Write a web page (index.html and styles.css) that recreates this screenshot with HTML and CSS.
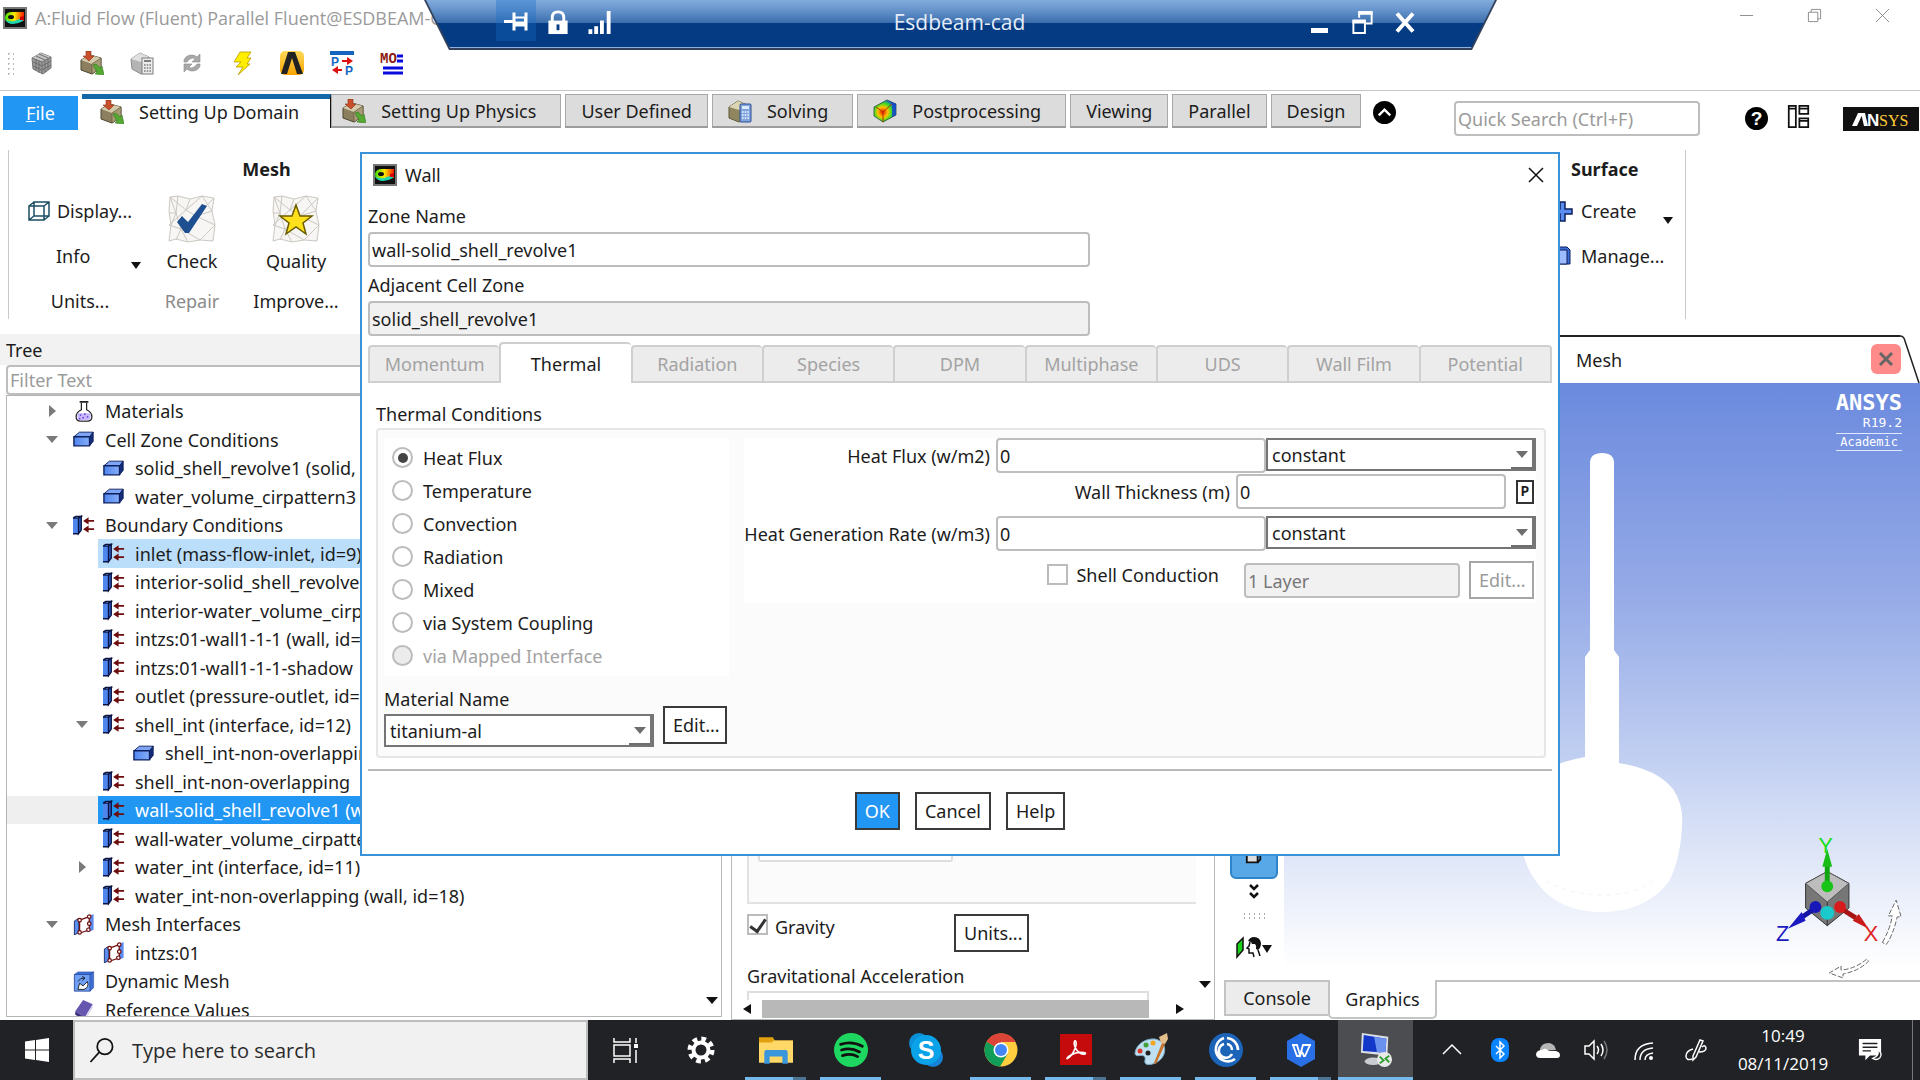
FILE: index.html
```html
<!DOCTYPE html>
<html lang="en">
<head>
  <meta charset="utf-8">
  <title>Fluid Flow (Fluent)</title>
  <link rel="stylesheet" href="styles.css">
</head>
<body>
  <!-- Shared icons -->
  <svg class="defs" aria-hidden="true">
    <linearGradient id="blue-face" x1="0" y1="0" x2="1" y2="0">
      <stop offset="0" stop-color="#4f86ee"/><stop offset="1" stop-color="#86adfa"/>
    </linearGradient>
    <linearGradient id="rainbow" x1="0" y1="0" x2="1" y2="0">
      <stop offset="0" stop-color="#3be000"/><stop offset=".5" stop-color="#ffe800"/><stop offset="1" stop-color="#f21c00"/>
    </linearGradient>
    <radialGradient id="heat" cx=".4" cy=".55" r=".65">
      <stop offset="0" stop-color="#e81800"/><stop offset=".35" stop-color="#ffc400"/><stop offset=".6" stop-color="#45dd20"/><stop offset="1" stop-color="#0048ff"/>
    </radialGradient>
    <linearGradient id="amber" x1="0" y1="0" x2="0" y2="1">
      <stop offset="0" stop-color="#ffd95a"/><stop offset="1" stop-color="#f5a300"/>
    </linearGradient>
    <symbol id="i-fluent" viewBox="0 0 24 22">
      <rect x="1" y="1" width="22" height="20" fill="#111" stroke="#777" stroke-width="2"/>
      <path d="M2 10q1-5 7-5h12v9h-3l-9 2-6-2q-1-2-1-4z" fill="url(#rainbow)"/>
      <path d="M2 12q3 3 9 2l9-3v3q-5 3-10 3-6 0-8-5z" fill="#20d8b0"/>
      <ellipse cx="8" cy="10" rx="3" ry="2" fill="#111"/>
      <path d="M17 10l4-1v4h-4z" fill="#d40000"/>
    </symbol>
    <symbol id="i-cube" viewBox="0 0 24 24">
      <path d="M2 7l9-5 10 4v11l-8 6-10-5z" fill="#9a9a9a" stroke="#777"/>
      <path d="M2 7l10 4 9-5-10-4z" fill="#c4c4c4"/>
      <path d="M2 7l10 4v12M12 11l9-5M6 8v12M9 10v12M15 9v12M18 8v11M3 11l9 4 9-5M3 15l9 4 9-5M6 5l9 4M9 3l9 4" stroke="#6e6e6e" fill="none"/>
    </symbol>
    <symbol id="i-box" viewBox="0 0 24 24">
      <path d="M1 9l9-5 11 3v10l-9 6-11-4z" fill="#8b7f5f" stroke="#4c4430"/>
      <path d="M1 9l9-5 11 3-9 6z" fill="#d3caac"/>
      <path d="M12 13l9-6v10l-9 6z" fill="#a89c78" stroke="#5c5238" stroke-width=".6"/>
      <path d="M6 0h5v5h3l-5 5-6-5h3z" fill="#c9502c" stroke="#8d2f14" stroke-width=".6"/>
      <path d="M13 14l3-1 4 4 2-2 2 9-9-1 2-2z" fill="#55a832" stroke="#2f7717" stroke-width=".6"/>
    </symbol>
    <symbol id="i-calc-gray" viewBox="0 0 24 24">
      <path d="M1 8l9-6 9 4v12l-8 5-9-5z" fill="#b4b4b4" stroke="#8d8d8d"/>
      <path d="M1 8l9-6 9 4-8 5z" fill="#e0e0e0"/>
      <rect x="12" y="7" width="11" height="16" fill="#ececec" stroke="#7d7d7d"/>
      <path d="M14 10h7" stroke="#7d7d7d" stroke-width="2"/>
      <path d="M14 14h7M14 17h7M14 20h7" stroke="#7d7d7d" stroke-width="1.6" stroke-dasharray="1.6 1.1"/>
    </symbol>
    <symbol id="i-calc" viewBox="0 0 24 24">
      <path d="M1 8l9-6 9 4v12l-8 5-10-4z" fill="#8f865f" stroke="#5e5637"/>
      <path d="M1 8l9-6 9 4-8 5z" fill="#dcd5b4"/>
      <rect x="12" y="5" width="11" height="18" rx="1" fill="#7fa3dd" stroke="#2c4f94"/>
      <rect x="14" y="7" width="7" height="3" fill="#dcebff"/>
      <path d="M14 13h7M14 16h7M14 19h7" stroke="#f2f6ff" stroke-width="1.6" stroke-dasharray="1.6 1.1"/>
    </symbol>
    <symbol id="i-post" viewBox="0 0 24 24">
      <path d="M1 8L14 1l9 4v11l-13 7-9-6z" fill="url(#heat)" stroke="#1b3a2b" stroke-width=".7"/>
      <path d="M14 1l9 4v11l-4 2V5z" fill="#1748c8" opacity=".8"/>
      <path d="M10 13l-7-5M10 13v10M10 13l9-8" stroke="#b03000" fill="none"/>
    </symbol>
    <symbol id="i-reload" viewBox="0 0 24 24">
      <path d="M4 11V9q2-5 8-5 3 0 5 2l3-3v8h-8l3-3q-2-2-5 0-2 1-3 3zM20 13v2q-2 5-8 5-3 0-5-2l-3 3v-8h8l-3 3q2 2 5 0 2-1 3-3z" fill="#a8a8a8" stroke="#8a8a8a" stroke-width=".6"/>
    </symbol>
    <symbol id="i-bolt" viewBox="0 0 24 24">
      <path d="M10 1h11l-4 6h4l-4 6h3L8 24l5-8H6l5-5H4z" fill="#ffee00" stroke="#b79b00" stroke-width=".8"/>
    </symbol>
    <symbol id="i-lambda" viewBox="0 0 24 24">
      <rect width="24" height="24" rx="5" fill="url(#amber)"/>
      <path d="M8 1h7l8 22h-6L12 7 7 23H1z" fill="#222"/>
    </symbol>
    <symbol id="i-slab" viewBox="0 0 24 20">
      <path d="M1 7l6-5h15l-3 5z" fill="#7ea5f5" stroke="#0d1f5c"/>
      <path d="M1 7h17v10H1z" fill="url(#blue-face)" stroke="#0d1f5c" stroke-width="1.5"/>
      <path d="M18 7l4-5v10l-4 5z" fill="#132c7a" stroke="#0d1f5c"/>
    </symbol>
    <symbol id="i-bc" viewBox="0 0 24 22">
      <path d="M0 3h6v17H0z" fill="#4f86ee"/>
      <path d="M0 3l3-2h6L6 3zM0 20h6" fill="#86adfa" stroke="#0a1440" stroke-width="1.5"/>
      <path d="M6 3l3-2v15l-3 4z" fill="#2f5fd0" stroke="#0a1440" stroke-width="1.5"/>
      <path d="M14 6h9M14 15h9" stroke="#6e0d0d" stroke-width="2"/>
      <path d="M11 6l6-4v8zM11 15l6-4v8z" fill="#6e0d0d"/>
    </symbol>
    <symbol id="i-mesh" viewBox="0 0 24 24">
      <path d="M1 8l5-3v16l-5 3z" fill="#5b8cf0" stroke="#12245e"/>
      <path d="M16 3l7-3v18l-7 3z" fill="#5b8cf0"/>
      <path d="M7 7l11-4v15L7 22z" fill="#fff" stroke="#6e0d0d" stroke-width="1.4"/>
      <g fill="#fff" stroke="#6e0d0d" stroke-width="1.4"><circle cx="7" cy="7" r="2"/><circle cx="18" cy="3" r="2"/><circle cx="18" cy="11" r="2"/><circle cx="17" cy="18" r="2"/><circle cx="7" cy="21" r="2"/></g>
    </symbol>
    <symbol id="i-flask" viewBox="0 0 22 24">
      <path d="M8 2v8q-6 3-6 8 0 5 5 5h8q5 0 5-5 0-5-6-8V2" fill="#fff" stroke="#222" stroke-width="1.4"/>
      <path d="M4 14h14q2 8-3 8H7q-5 0-3-8z" fill="#c9b8ff"/>
      <path d="M6 1h10" stroke="#222" stroke-width="2"/>
      <g fill="#6b43d6"><circle cx="7" cy="16" r="1"/><circle cx="12" cy="15" r="1"/><circle cx="15" cy="18" r="1"/><circle cx="10" cy="19" r="1"/><circle cx="6" cy="20" r="1"/></g>
    </symbol>
    <symbol id="i-dynamic" viewBox="0 0 24 24">
      <path d="M1 4h18v19H1z" fill="#6fa0f5" stroke="#27479c"/>
      <path d="M19 4l4-3v18l-4 4zM1 4l4-3h18l-4 3z" fill="#3c6fd6" stroke="#27479c" stroke-width=".6"/>
      <path d="M5 21l2-7 4 3 5-5q2 7-4 9z" fill="#fff" stroke="#111"/>
      <path d="M5 12q3-5 8-4M13 8l-3-2M13 8l-3 3" stroke="#111" fill="none"/>
    </symbol>
    <symbol id="i-book" viewBox="0 0 24 24">
      <path d="M2 14L11 1l11 5-9 15z" fill="#6656b0"/>
      <path d="M2 14l11 7v3L2 18z" fill="#3b2d80"/>
      <path d="M13 21l9-15v4l-9 14z" fill="#d9d4ef"/>
    </symbol>
    <symbol id="i-meshbg" viewBox="0 0 48 48">
      <path d="M2 2L10 1 22 4 34 1 46 3 44 16 47 30 45 46 32 45 20 47 8 44 1 46 3 30 1 16z" fill="#f7f6f4" stroke="#ccc8c2"/>
      <path d="M2 2l16 13L34 1M18 15L1 30l12 4-5 11M18 15l10 6 16-5M28 21L13 34l19 11M28 21l19 9-15 15M10 1L8 18l-7 0M46 3L28 21M13 34l7 13M2 2l6 16 5 16M22 4l-4 11M34 1l10 15M47 30l-15 15M3 30l5-12" stroke="#ccc8c2" fill="none"/>
    </symbol>
  </svg>

  <div class="app">
    <!-- Title bar -->
    <header class="titlebar">
      <svg class="app-icon"><use href="#i-fluent"/></svg>
      <span class="window-title">A:Fluid Flow (Fluent) Parallel Fluent@ESDBEAM-CAD</span>
      <div class="window-controls">
        <button type="button" aria-label="Minimize"><svg viewBox="0 0 16 16"><path d="M1 8h14"/></svg></button>
        <button type="button" aria-label="Restore"><svg viewBox="0 0 16 16"><path d="M1.500 4.500h10v10h-10zM4.500 4.500v-3h10v10h-3"/></svg></button>
        <button type="button" aria-label="Close"><svg viewBox="0 0 16 16"><path d="M1 1l14 14M15 1L1 15"/></svg></button>
      </div>
    </header>

    <!-- Quick toolbar -->
    <div class="toolbar">
      <span class="grip"></span>
      <button type="button" aria-label="Mesh"><svg><use href="#i-cube"/></svg></button>
      <button type="button" aria-label="Import"><svg><use href="#i-box"/></svg></button>
      <button type="button" aria-label="Case"><svg><use href="#i-calc-gray"/></svg></button>
      <button type="button" aria-label="Refresh"><svg><use href="#i-reload"/></svg></button>
      <button type="button" aria-label="Update"><svg><use href="#i-bolt"/></svg></button>
      <button type="button" aria-label="Workbench"><svg><use href="#i-lambda"/></svg></button>
      <button type="button" aria-label="Parameters">
        <svg viewBox="0 0 24 24"><path d="M0 0h24v4H0z" fill="#1565c0"/><path d="M12 10h9M4 19h8" stroke="#e01010" stroke-width="2"/><path d="M23 10l-6-4v8zM2 19l6-4v8z" fill="#e01010"/><text x="1" y="15" class="tiny blue">P</text><text x="15" y="24" class="tiny blue">P</text></svg>
      </button>
      <button type="button" aria-label="Monitor">
        <svg viewBox="0 0 24 24"><text x="0" y="12" class="tiny mono maroon">MO</text><path d="M17 5h6M17 10h6M3 17h20M3 22h20" stroke="#0a0ae0" stroke-width="3"/></svg>
      </button>
    </div>

    <!-- Ribbon tabs -->
    <nav class="ribbon-tabs">
      <button type="button" class="tab file"><span><u>F</u>ile</span></button>
      <button type="button" class="tab active wide"><svg><use href="#i-box"/></svg>Setting Up Domain</button>
      <button type="button" class="tab wide physics"><svg><use href="#i-box"/></svg>Setting Up Physics</button>
      <button type="button" class="tab">User Defined</button>
      <button type="button" class="tab wide"><svg><use href="#i-calc"/></svg>Solving</button>
      <button type="button" class="tab wide"><svg><use href="#i-post"/></svg>Postprocessing</button>
      <button type="button" class="tab">Viewing</button>
      <button type="button" class="tab">Parallel</button>
      <button type="button" class="tab">Design</button>
      <button type="button" class="round" aria-label="Collapse ribbon"><svg viewBox="0 0 24 24"><circle cx="12" cy="12" r="12"/><path d="M6 15l6-6 6 6" stroke="#fff" stroke-width="2.500" fill="none"/></svg></button>
      <input class="quick-search" type="text" placeholder="Quick Search (Ctrl+F)" aria-label="Quick Search">
      <button type="button" class="round help" aria-label="Help"><svg viewBox="0 0 24 24"><circle cx="12" cy="12" r="12"/><text x="12" y="19" class="qmark">?</text></svg></button>
      <button type="button" class="round layout" aria-label="Arrange workspace"><svg viewBox="0 0 24 26" fill="none" stroke="#111" stroke-width="2"><path d="M1 1h8v24H1zM1 4h8M13 1h10v9H13zM13 4h10M13 15h10v10H13zM13 18h10"/></svg></button>
      <span class="brand"><svg viewBox="0 0 76 24"><path d="M9 19l6-13h5l-6 13zM18 6h4l3 13h-4z" fill="#fff"/><text x="24" y="19" class="brand-n">N</text><text x="36" y="19" class="brand-sys">SYS</text></svg></span>
    </nav>

    <!-- Ribbon -->
    <section class="ribbon">
      <div class="group mesh">
        <h2>Mesh</h2>
        <div class="mesh-left">
          <button type="button"><svg class="small" viewBox="0 0 22 20" fill="none" stroke="#1d4e63" stroke-width="1.500"><path d="M1 5h15v14H1zM6 1h15v14H6zM1 5l5-4M16 5l5-4M16 19l5-4M1 19l5-4"/></svg>Display...</button>
          <button type="button" class="has-menu">Info</button>
          <button type="button">Units...</button>
        </div>
        <div class="mesh-col">
          <button type="button" class="big"><svg viewBox="0 0 48 48"><use href="#i-meshbg"/><path d="M9 27l5-6 6 6L34 9l5 2-18 27h-4z" fill="#1d4f91"/></svg>Check</button>
          <button type="button" disabled>Repair</button>
        </div>
        <div class="mesh-col">
          <button type="button" class="big"><svg viewBox="0 0 48 48"><use href="#i-meshbg"/><path d="M24 10l4 11h12l-9 7 3 11-10-7-10 7 3-11-9-7h12z" fill="#ffe01a" stroke="#6b5c00" stroke-width="1.500"/></svg>Quality</button>
          <button type="button">Improve...</button>
        </div>
      </div>
      <div class="group surface">
        <h2>Surface</h2>
        <button type="button" class="has-menu"><svg class="small" viewBox="0 0 20 20"><path d="M7 1h5v7h7v5h-7v7H7v-7H0V8h7z" fill="#5b8cf0" stroke="#0d1f5c" stroke-width="1.500"/></svg>Create</button>
        <button type="button"><svg class="small" viewBox="0 0 20 20"><path d="M6 1h8l3 3v14H6z" fill="#3c6fd6" stroke="#0d1f5c"/><path d="M1 4h13v14H1z" fill="#9dbcff" stroke="#0d1f5c"/></svg>Manage...</button>
      </div>
    </section>

    <!-- Docked panels -->
    <main class="workspace">
      <section class="tree-panel">
        <h2>Tree</h2>
        <input type="text" placeholder="Filter Text" aria-label="Filter Text">
        <ul class="tree">
          <li><i class="closed"></i><a href="#"><svg><use href="#i-flask"/></svg>Materials</a></li>
          <li><i class="open"></i><a href="#"><svg><use href="#i-slab"/></svg>Cell Zone Conditions</a></li>
          <li class="l1"><i></i><a href="#"><svg><use href="#i-slab"/></svg>solid_shell_revolve1 (solid, id=3)</a></li>
          <li class="l1"><i></i><a href="#"><svg><use href="#i-slab"/></svg>water_volume_cirpattern3 (fluid, id=2)</a></li>
          <li><i class="open"></i><a href="#"><svg><use href="#i-bc"/></svg>Boundary Conditions</a></li>
          <li class="l1 hover"><i></i><a href="#"><svg><use href="#i-bc"/></svg>inlet (mass-flow-inlet, id=9)</a></li>
          <li class="l1"><i></i><a href="#"><svg><use href="#i-bc"/></svg>interior-solid_shell_revolve1 (interior, id=1)</a></li>
          <li class="l1"><i></i><a href="#"><svg><use href="#i-bc"/></svg>interior-water_volume_cirpattern3</a></li>
          <li class="l1"><i></i><a href="#"><svg><use href="#i-bc"/></svg>intzs:01-wall1-1-1 (wall, id=16)</a></li>
          <li class="l1"><i></i><a href="#"><svg><use href="#i-bc"/></svg>intzs:01-wall1-1-1-shadow</a></li>
          <li class="l1"><i></i><a href="#"><svg><use href="#i-bc"/></svg>outlet (pressure-outlet, id=10)</a></li>
          <li class="l1"><i class="open"></i><a href="#"><svg><use href="#i-bc"/></svg>shell_int (interface, id=12)</a></li>
          <li class="l2"><i></i><a href="#"><svg><use href="#i-slab"/></svg>shell_int-non-overlapping</a></li>
          <li class="l1"><i></i><a href="#"><svg><use href="#i-bc"/></svg>shell_int-non-overlapping</a></li>
          <li class="l1 selected"><i></i><a href="#"><svg><use href="#i-bc"/></svg>wall-solid_shell_revolve1 (wall, id=7)</a></li>
          <li class="l1"><i></i><a href="#"><svg><use href="#i-bc"/></svg>wall-water_volume_cirpattern3</a></li>
          <li class="l1"><i class="closed"></i><a href="#"><svg><use href="#i-bc"/></svg>water_int (interface, id=11)</a></li>
          <li class="l1"><i></i><a href="#"><svg><use href="#i-bc"/></svg>water_int-non-overlapping (wall, id=18)</a></li>
          <li><i class="open"></i><a href="#"><svg><use href="#i-mesh"/></svg>Mesh Interfaces</a></li>
          <li class="l1"><i></i><a href="#"><svg><use href="#i-mesh"/></svg>intzs:01</a></li>
          <li><i></i><a href="#"><svg><use href="#i-dynamic"/></svg>Dynamic Mesh</a></li>
          <li><i></i><a href="#"><svg><use href="#i-book"/></svg>Reference Values</a></li>
        </ul>
        <span class="arrow-down tree-scroll"></span>
      </section>

      <section class="task-panel">
        <div class="task-body">
          <div class="task-box"><div class="task-inner"></div></div>
          <div class="gravity-row">
            <input type="checkbox" id="gravity" checked><label for="gravity">Gravity</label>
            <button type="button" class="btn">Units...</button>
          </div>
          <h3>Gravitational Acceleration</h3>
          <div class="accel-box"></div>
        </div>
        <div class="hscroll"><span class="arrow-left"></span><span class="thumb"></span><span class="arrow-right"></span></div>
        <span class="arrow-down task-scroll"></span>
      </section>

      <section class="view-panel">
        <div class="view-head">
          <span>Mesh</span>
          <button type="button" class="view-close" aria-label="Close view"><svg viewBox="0 0 16 16"><path d="M2 2l12 12M14 2L2 14" stroke="#666" stroke-width="3"/></svg></button>
          <svg class="view-edge" viewBox="0 0 20 48"><path d="M0 1q4 0 5 5l14 42" fill="none" stroke="#222" stroke-width="1.500"/></svg>
        </div>
        <div class="view-body">
          <div class="view-tools">
            <button type="button" class="on" aria-label="Fit"><svg viewBox="0 0 20 20"><path d="M2 3h12v14H2z" fill="#ddd" stroke="#111" stroke-width="2"/><path d="M14 17l3-3V2" fill="none" stroke="#111" stroke-width="2"/></svg></button>
            <svg class="more" viewBox="0 0 12 16"><path d="M2 1l4 4 4-4M2 9l4 4 4-4" fill="none" stroke="#111" stroke-width="2.500"/></svg>
            <span class="dots"></span>
            <button type="button" aria-label="Views"><svg viewBox="0 0 36 22"><path d="M1 8l6-6v12l-6 7z" fill="#19d119" stroke="#111" stroke-width="1.500"/><path d="M12 5q2-4 6-4 6 0 7 6 0 5-3 7l-2-1q1-3-1-5h-3l-1-2z" fill="#111"/><path d="M14 6l-1 4-2 2 2 1v4h4l1 4M22 14l2 6" fill="none" stroke="#111" stroke-width="1.500"/><path d="M26 9h10l-5 8z" fill="#111"/></svg></button>
          </div>
          <div class="canvas">
            <!-- Solid body preview -->
            <svg class="model" viewBox="0 0 420 560">
              <path d="M306 80q0-10 12-10t12 10v187l5 7v106q38 6 54 26 11 16 9 38-2 35-14 56-24 29-66 29-36 0-57-20-20-20-24-48-2-62 20-72 14-9 44-15V274l5-7z" fill="#fff"/>
              <path d="M262 498q24 14 58 14 30 0 48-14" fill="none" stroke="#f3f3f3" stroke-dasharray="4 5"/>
            </svg>
            <div class="watermark"><b>ANSYS</b><span>R19.2</span><em>Academic</em></div>
            <svg class="triad" viewBox="0 0 130 140">
              <path d="M48 33l22 12v25l-22 18-22-18V45z" fill="#777" stroke="#333"/>
              <path d="M48 33l22 12-22 19-22-19z" fill="#bdbdbd" stroke="#555"/>
              <path d="M48 64v24" stroke="#333"/>
              <path d="M48 48V24" stroke="#12a512" stroke-width="5"/><path d="M43 28l5-18 5 18z" fill="#18bd18"/><circle cx="48" cy="48" r="6" fill="#18c418"/>
              <path d="M36 70L20 81" stroke="#1515a5" stroke-width="5"/><path d="M22 74L8 91l18-8z" fill="#1a1ac0"/><circle cx="36" cy="69" r="6" fill="#1818b8"/>
              <path d="M61 70l16 10" stroke="#a51515" stroke-width="5"/><path d="M74 83l16 8-10-15z" fill="#c81a1a"/><circle cx="61" cy="69" r="6" fill="#d61c1c"/>
              <circle cx="48" cy="75" r="7" fill="#19c9cc"/>
              <text x="39" y="14" fill="#12e012">Y</text><text x="-4" y="104" fill="#1a1ac0">Z</text><text x="85" y="104" fill="#e02222">X</text>
              <path d="M104 105q8-14 10-27h-4l8-16 5 17h-4q-4 18-11 28zM88 122q-12 10-26 11v-4l-12 7 14 5v-4q16-3 26-13z" fill="#fff" stroke="#666" stroke-dasharray="5 2"/>
            </svg>
          </div>
        </div>
        <div class="view-tabs">
          <button type="button">Console</button>
          <button type="button" class="current">Graphics</button>
          <span></span>
        </div>
      </section>
    </main>

    <!-- Wall dialog -->
    <form class="dialog">
      <div class="dialog-title">
        <svg class="app-icon"><use href="#i-fluent"/></svg>
        <span>Wall</span>
        <button type="button" aria-label="Close dialog"><svg viewBox="0 0 16 16"><path d="M1 1l14 14M15 1L1 15" stroke="#111" stroke-width="1.500"/></svg></button>
      </div>
      <div class="zone">
        <label for="zone-name">Zone Name</label>
        <input type="text" id="zone-name" value="wall-solid_shell_revolve1">
        <label for="adjacent">Adjacent Cell Zone</label>
        <input type="text" id="adjacent" value="solid_shell_revolve1" readonly>
      </div>
      <div class="dialog-tabs">
        <button type="button" disabled>Momentum</button>
        <button type="button" class="current">Thermal</button>
        <button type="button" disabled>Radiation</button>
        <button type="button" disabled>Species</button>
        <button type="button" disabled>DPM</button>
        <button type="button" disabled>Multiphase</button>
        <button type="button" disabled>UDS</button>
        <button type="button" disabled>Wall Film</button>
        <button type="button" disabled>Potential</button>
      </div>
      <h3>Thermal Conditions</h3>
      <div class="thermal">
        <div class="thermal-left">
          <div class="radios">
            <label><input type="radio" name="condition" checked>Heat Flux</label>
            <label><input type="radio" name="condition">Temperature</label>
            <label><input type="radio" name="condition">Convection</label>
            <label><input type="radio" name="condition">Radiation</label>
            <label><input type="radio" name="condition">Mixed</label>
            <label><input type="radio" name="condition">via System Coupling</label>
            <label class="off"><input type="radio" name="condition" disabled>via Mapped Interface</label>
          </div>
          <div class="material">
            <div>
              <label for="material">Material Name</label>
              <span class="combo"><select id="material"><option>titanium-al</option></select></span>
            </div>
            <button type="button" class="btn">Edit...</button>
          </div>
        </div>
        <div class="thermal-right">
          <div class="line">
            <label for="heat-flux">Heat Flux (w/m2)</label>
            <input type="text" id="heat-flux" value="0">
            <span class="combo"><select aria-label="Heat Flux profile"><option>constant</option></select></span>
          </div>
          <div class="line thickness">
            <label for="thickness">Wall Thickness (m)</label>
            <input type="text" id="thickness" value="0">
            <button type="button" class="param">P</button>
          </div>
          <div class="line">
            <label for="heat-gen">Heat Generation Rate (w/m3)</label>
            <input type="text" id="heat-gen" value="0">
            <span class="combo"><select aria-label="Heat Generation profile"><option>constant</option></select></span>
          </div>
          <div class="line shell">
            <input type="checkbox" id="shell"><label for="shell">Shell Conduction</label>
            <input type="text" value="1 Layer" aria-label="Layers" disabled>
            <button type="button" class="btn" disabled>Edit...</button>
          </div>
        </div>
      </div>
      <div class="dialog-buttons">
        <button type="button" class="btn primary">OK</button>
        <button type="button" class="btn">Cancel</button>
        <button type="button" class="btn">Help</button>
      </div>
    </form>
  </div>

  <!-- Remote desktop bar -->
  <div class="rdp">
    <div class="rdp-inner">
      <button type="button" class="pin" aria-label="Pin"><svg viewBox="0 0 24 24"><path d="M0 12h9M10 3v18M22 3v18" stroke="#fff" stroke-width="3" fill="none"/><path d="M10 8h11v8H10z" fill="none" stroke="#fff" stroke-width="2"/><path d="M10 12h11v4H10z" fill="#fff"/></svg></button>
      <svg viewBox="0 0 24 26"><path d="M2 11h20v14H2z" fill="#fff"/><path d="M6 12V8q0-6 6-6t6 6v4" stroke="#fff" stroke-width="3" fill="none"/><path d="M12 15v6" stroke="#053b82" stroke-width="3"/></svg>
      <svg viewBox="0 0 24 26"><path d="M2 20v5M8 17v8M14 11v14M21 1v24" stroke="#fff" stroke-width="4"/></svg>
      <span>Esdbeam-cad</span>
      <button type="button" aria-label="Minimize session"><svg viewBox="0 0 24 24"><path d="M2 20h17" stroke="#fff" stroke-width="5"/></svg></button>
      <button type="button" aria-label="Restore session"><svg viewBox="0 0 24 26"><path d="M8 8V3h13v11h-6" fill="none" stroke="#fff" stroke-width="2"/><path d="M7 3h15M1 12h14" stroke="#fff" stroke-width="4"/><path d="M2 12h12v12H2z" fill="none" stroke="#fff" stroke-width="2"/></svg></button>
      <button type="button" aria-label="Close session"><svg viewBox="0 0 24 24"><path d="M4 3l16 18M20 3L4 21" stroke="#fff" stroke-width="4"/></svg></button>
    </div>
  </div>

  <!-- Taskbar -->
  <footer class="taskbar">
    <button type="button" class="start" aria-label="Start"><svg viewBox="0 0 24 24" fill="#fff"><path d="M0 3.500l10-1.500v9.500H0zM11 2l13-2v11.500H11zM0 12.500h10V22L0 20.500zM11 12.500h13V24l-13-2z"/></svg></button>
    <label class="search"><svg viewBox="0 0 24 26"><circle cx="15" cy="9" r="8" fill="none" stroke="#111" stroke-width="1.800"/><path d="M9 15L0 25" stroke="#111" stroke-width="1.800"/></svg><input type="text" placeholder="Type here to search" aria-label="Search"></label>
    <button type="button" class="task" aria-label="Task view"><svg viewBox="0 0 28 28" fill="none" stroke="#fff" stroke-width="1.500"><path d="M2 2v4h16V2M2 9h16v11H2zM2 27v-4h16v4M24 2v5M24 14v13"/><path d="M22 10h4" stroke-width="4"/></svg></button>
    <button type="button" class="task" aria-label="Settings"><svg viewBox="0 0 28 28"><circle cx="14" cy="14" r="11" fill="none" stroke="#fff" stroke-width="5" stroke-dasharray="4.600 4.040"/><circle cx="14" cy="14" r="7.500" fill="none" stroke="#fff" stroke-width="4"/></svg></button>
    <button type="button" class="task open-app multi" aria-label="File Explorer"><svg viewBox="0 0 32 32"><path d="M0 4h13l2 3h17v6H0z" fill="#e0a010"/><path d="M0 9h12l2-2h18v21H0z" fill="#ffd867"/><path d="M5 18q0-2 2-2h18q2 0 2 2v11h-5v-7H10v7H5z" fill="#3a97db"/></svg></button>
    <button type="button" class="task open-app" aria-label="Spotify"><svg viewBox="0 0 36 36"><circle cx="18" cy="18" r="18" fill="#1ed760"/><path d="M7 12q12-4 23 2M8 18q10-3 19 2M9 24q9-3 16 1" fill="none" stroke="#111" stroke-width="3" stroke-linecap="round"/></svg></button>
    <button type="button" class="task" aria-label="Skype"><svg viewBox="0 0 34 34"><circle cx="10" cy="10" r="10" fill="#0b8fd6"/><circle cx="24" cy="24" r="10" fill="#1583d8"/><circle cx="17" cy="17" r="15" fill="#0aa2e8"/><text x="17" y="26" class="app-letter">S</text></svg></button>
    <button type="button" class="task open-app" aria-label="Chrome"><svg viewBox="0 0 34 34"><circle cx="17" cy="17" r="16.500" fill="#ffcd40"/><path d="M17 17L2.700 8.800A16.500 16.500 0 0 1 31.500 9H17z" fill="#db4437"/><path d="M17 17L2.700 8.800A16.500 16.500 0 0 0 16 33.500l7.500-12.500z" fill="#0f9d58"/><path d="M2.700 8.800A16.500 16.500 0 0 1 31.500 9H17l-7 4z" fill="#db4437"/><circle cx="17" cy="17" r="7.500" fill="#fff"/><circle cx="17" cy="17" r="6" fill="#4285f4"/></svg></button>
    <button type="button" class="task open-app multi" aria-label="Acrobat"><svg viewBox="0 0 34 34"><path d="M1 1h32v31H1z" fill="#c50b0b"/><path d="M9 25c4-2 9-11 8-16-1-3-3 0-1 5s7 8 10 7c3-2-8-3-14 1-4 2-5 5-3 3z" fill="none" stroke="#fff" stroke-width="1.600"/></svg></button>
    <button type="button" class="task open-app" aria-label="Paint"><svg viewBox="0 0 34 34"><path d="M1 20C2 11 12 5 21 6c9 2 11 9 9 15-3 9-15 12-18 10-3-3 1-5-2-8-3-2-9 2-9-3z" fill="#bfe0f2" stroke="#7ba9c4"/><circle cx="6" cy="18" r="2.500" fill="#d93a2b"/><circle cx="12" cy="12" r="2.500" fill="#45a03c"/><circle cx="19" cy="10" r="2.500" fill="#f3a61c"/><circle cx="14" cy="20" r="2.500" fill="#222"/><path d="M20 30l8-20 3 1-9 20z" fill="#c9722a"/><path d="M27 10l-2-6 8-4 1 6-3 5z" fill="#e2bf8b"/></svg></button>
    <button type="button" class="task open-app" aria-label="Citrix"><svg viewBox="0 0 34 34"><circle cx="17" cy="17" r="17" fill="#1b64b8"/><path d="M26 26A12 12 0 1 1 15 5M23 21a7 7 0 1 1-8-10M18 5a12 12 0 0 1 11 12M18 11a6 6 0 0 1 5 6" fill="none" stroke="#fff" stroke-width="2.600"/></svg></button>
    <button type="button" class="task open-app multi" aria-label="WPS Office"><svg viewBox="0 0 34 34"><path d="M17 0l14 8v18l-14 8-14-8V8z" fill="#2970e6"/><path d="M8 12h5l3 10 3-10h8M9 12l4 11h3l2-6M19 23h2l5-11M17 17l3 6" fill="none" stroke="#fff" stroke-width="1.800"/></svg></button>
    <button type="button" class="task open-app focused" aria-label="Remote Desktop"><svg viewBox="0 0 34 36"><path d="M2 0l28 4-1 20-28-3z" fill="#dcdfe4"/><path d="M4 2l24 4-1 15L3 19z" fill="#1237c9"/><path d="M15 4l13 2-1 15-9-1z" fill="#6b91ef"/><ellipse cx="14" cy="30" rx="9" ry="4" fill="#c9ccd1"/><circle cx="26" cy="28" r="8" fill="#e8e8e8"/><path d="M21 25l4 4-4 3M31 24l-4 3 4 4" stroke="#2f9e2f" stroke-width="2" fill="none"/></svg></button>
    <div class="tray">
      <button type="button" aria-label="Show hidden icons"><svg viewBox="0 0 24 24"><path d="M3 16l9-9 9 9"/></svg></button>
      <button type="button" aria-label="Bluetooth"><svg viewBox="0 0 24 24"><rect x="3" y="0" width="18" height="24" rx="8" fill="#0a84ff" stroke="none"/><path d="M8 8l8 8-4 4V4l4 4-8 8"/></svg></button>
      <button type="button" aria-label="OneDrive"><svg viewBox="0 0 24 24"><path d="M4 13q0-8 9-8 6 1 7 7z" fill="#b5b5b5" stroke="none"/><path d="M4 20q-4 0-4-4 1-4 6-4 3-3 7 1l7 0q4 1 4 4t-3 3z" fill="#fff" stroke="none"/></svg></button>
      <button type="button" aria-label="Volume"><svg viewBox="0 0 24 24"><path d="M1 8h4l5-5v18l-5-5H1zM13 8q3 4 0 8M17 6q4 6 0 12"/><path d="M20 3q6 9 0 18" stroke="#777"/></svg></button>
      <button type="button" aria-label="Network"><svg viewBox="0 0 24 24"><path d="M3 22Q3 6 21 5M8 22q0-11 13-12M13 22q0-6 8-7"/><circle cx="19" cy="20" r="2" fill="#fff" stroke="none"/></svg></button>
      <button type="button" class="pen" aria-label="Ink"><svg viewBox="0 0 24 24"><path d="M9 18L16 2l3 1-7 16-3 3zM9 11q-7 2-7 7t6 3M15 14q7 0 7-4-1-4-4-1"/></svg></button>
      <div class="clock"><span>10:49</span><span>08/11/2019</span></div>
      <button type="button" class="notify" aria-label="Notifications"><svg viewBox="0 0 26 26"><path d="M1 1h24v18H13l-5 5v-5H1z" fill="#fff"/><path d="M5 6h16M5 10h16M5 14h9" stroke="#202124"/><path d="M21 13q3 6-5 9 5 3 8-1 3-5-3-8z" fill="#202124" stroke="#fff" stroke-width="1.500"/></svg></button>
    </div>
  </footer>
</body>
</html>
```
FILE: styles.css
```css
/* Base */
* {
  box-sizing: border-box;
}
body {
  margin: 0;
  height: 100vh;
  display: flex;
  flex-direction: column;
  overflow: hidden;
  font-family: "Noto Sans", sans-serif;
  font-size: 18px;
  line-height: 24px;
  color: #1c1c1c;
  background: #fff;
}
button, input, select {
  font: inherit;
  color: inherit;
}
button {
  padding: 0;
  border: 0;
  background: none;
  white-space: nowrap;
}
h2, h3 {
  margin: 0;
  font-size: 18px;
  font-weight: normal;
}
svg {
  display: block;
  flex: none;
  overflow: visible;
}
.defs {
  position: absolute;
  width: 0;
  height: 0;
}
input[type="text"] {
  min-width: 0;
  height: 35px;
  padding: 0 2px;
  border: 2px solid #bdbdbd;
  border-radius: 4px;
  background: #fff;
}
::placeholder {
  color: #9a9a9a;
  opacity: 1;
}
.app {
  position: relative;
  flex: 1;
  min-height: 0;
  display: flex;
  flex-direction: column;
}

/* Title bar */
.titlebar {
  display: flex;
  align-items: center;
  height: 36px;
  padding-left: 3px;
  color: #9a9a9a;
}
.app-icon {
  width: 24px;
  height: 22px;
}
.window-title {
  margin-left: 8px;
  font-family: "Open Sans", sans-serif;
}
.window-controls {
  display: flex;
  margin: 0 4px 6px auto;
}
.window-controls button {
  display: grid;
  place-items: center;
  width: 68px;
  height: 30px;
}
.window-controls svg {
  width: 15px;
  height: 15px;
  fill: none;
  stroke: #8a8a8a;
}

/* Quick toolbar */
.toolbar {
  display: flex;
  align-items: center;
  gap: 25px;
  height: 55px;
  padding-left: 6px;
  border-bottom: 1px solid #c6c6c6;
}
.toolbar button {
  width: 25px;
}
.toolbar svg {
  width: 24px;
  height: 24px;
}
.grip {
  width: 8px;
  height: 24px;
  margin-right: -9px;
  background: radial-gradient(#bbb 1px, transparent 1px) 0 0 / 5px 5px;
}
.tiny {
  font: bold 12px "Liberation Sans", sans-serif;
}
.mono {
  font: bold 14px "Liberation Mono", monospace;
}
.blue {
  fill: #1565c0;
}
.maroon {
  fill: #8c2010;
}

/* Ribbon tabs */
.ribbon-tabs {
  display: flex;
  align-items: flex-start;
  gap: 4px;
  height: 37px;
  padding: 3px 1px 0 3px;
}
.tab {
  display: flex;
  align-items: center;
  height: 34px;
  padding: 0 15px;
  border: 1px solid #a8a8a8;
  border-bottom: 2px solid #9c9c9c;
  background: #dcdcdc;
}
.tab svg {
  width: 24px;
  height: 24px;
  margin-right: 15px;
}
.tab.wide {
  padding: 0 24px 0 15px;
}
.tab.file {
  justify-content: center;
  width: 75px;
  margin-top: 2px;
  border: 0;
  color: #fff;
  background: #2196f3;
}
.tab.active {
  height: 34px;
  padding: 0 31px 3px 18px;
  border: 0;
  border-top: 4px solid #1368a8;
  border-right: 1px solid #111;
  box-shadow: inset 0 1px #1368a8;
  background: #fff;
}
.tab.physics {
  margin-left: -4px;
  padding-left: 10px;
}
.round {
  margin: 7px 0 0 8px;
}
.round svg {
  width: 23px;
  height: 23px;
}
.quick-search {
  width: 246px;
  margin: 7px 0 0 auto;
}
.round.help {
  margin: 13px 0 0 41px;
}
.round.layout {
  margin: 11px 0 0 15px;
}
.qmark {
  font: bold 20px "Liberation Sans", sans-serif;
  fill: #fff;
  text-anchor: middle;
}
.brand {
  width: 76px;
  margin: 13px 0 0 29px;
  background: #111;
}
.brand-n {
  font: bold 17px "Liberation Sans", sans-serif;
  fill: #fff;
}
.brand-sys {
  font: 16px "Liberation Serif", serif;
  fill: #fdc93a;
}

/* Ribbon */
.ribbon {
  display: flex;
  height: 206px;
  padding: 22px 234px 15px 8px;
}
.group {
  height: 169px;
}
.group h2 {
  font-weight: bold;
  line-height: 38px;
}
.group button {
  display: flex;
  align-items: center;
  height: 45px;
}
.group button:disabled {
  color: #8a8a8a;
}
.group .small {
  width: 22px;
  height: 20px;
  margin-right: 7px;
}
.mesh {
  display: grid;
  grid-template-columns: 142px 82px 126px 1fr;
  width: 516px;
  border-left: 1px solid #c9c9c9;
}
.mesh h2 {
  grid-column: 1 / -1;
  height: 38px;
  text-align: center;
}
.mesh-left, .mesh-col {
  display: flex;
  flex-direction: column;
  align-items: center;
}
.mesh-left .has-menu {
  width: 122px;
  padding-left: 37px;
}
.has-menu::after {
  content: "";
  margin: 20px 0 0 auto;
  border: 5px solid transparent;
  border-top: 7px solid #111;
  border-bottom: 0;
}
.group .big {
  flex-direction: column;
  gap: 6px;
  height: 90px;
  padding-top: 7px;
}
.big svg {
  width: 48px;
  height: 48px;
}
.surface {
  width: 134px;
  margin-left: auto;
  border-right: 1px solid #c9c9c9;
}
.surface h2 {
  padding-left: 19px;
}
.surface .has-menu {
  width: 121px;
}

/* Workspace */
.workspace {
  flex: 1;
  min-height: 0;
  display: grid;
  grid-template-columns: 722px 484px 1fr;
  column-gap: 9px;
}

/* Tree */
.tree-panel {
  position: relative;
  display: flex;
  flex-direction: column;
  min-height: 0;
  padding-bottom: 3px;
}
.tree-panel h2 {
  height: 31px;
  padding-left: 6px;
  line-height: 32px;
  background: #f2f2f2;
}
.tree-panel input {
  height: 30px;
  margin-left: 6px;
}
.tree {
  flex: 1;
  min-height: 0;
  margin: 0 0 0 6px;
  padding: 1px 0 0;
  overflow: hidden;
  list-style: none;
  border: 1px solid #b5b5b5;
}
.tree li {
  display: flex;
  align-items: center;
  height: 28px;
  padding-left: 34px;
}
.tree li:nth-child(even) {
  height: 29px;
}
.tree .l1 {
  padding-left: 64px;
}
.tree .l2 {
  padding-left: 94px;
}
.tree i {
  display: flex;
  width: 27px;
  padding-left: 5px;
}
.tree .open::after {
  content: "";
  border: 6px solid transparent;
  border-top: 7px solid #7a7a7a;
  border-bottom: 0;
}
.tree .closed::after {
  content: "";
  margin-left: 3px;
  border: 6px solid transparent;
  border-left: 7px solid #7a7a7a;
  border-right: 0;
}
.tree a {
  flex: 1;
  display: flex;
  align-items: center;
  gap: 10px;
  height: 100%;
  padding-left: 5px;
  color: inherit;
  text-decoration: none;
  white-space: nowrap;
}
.tree svg {
  width: 22px;
  height: 21px;
}
.hover a {
  background: #bbdefb;
}
.selected {
  background: #efefef;
}
.tree .selected a {
  color: #fff;
  background: #2196f3;
}

/* Scroll arrows */
.arrow-down {
  border: 6px solid transparent;
  border-top: 7px solid #111;
  border-bottom: 0;
}
.arrow-left {
  border: 5px solid transparent;
  border-right: 8px solid #111;
  border-left: 0;
}
.arrow-right {
  border: 5px solid transparent;
  border-left: 8px solid #111;
  border-right: 0;
}
.tree-scroll {
  position: absolute;
  right: 4px;
  bottom: 16px;
}
.task-scroll {
  position: absolute;
  right: 3px;
  bottom: 31px;
}

/* Task page */
.task-panel {
  position: relative;
  display: flex;
  flex-direction: column;
  min-height: 0;
  padding-bottom: 1px;
  border: 1px solid #b9b9b9;
  border-top: 0;
}
.task-body {
  flex: 1;
  min-height: 0;
  display: flex;
  flex-direction: column;
  padding: 0 18px 0 15px;
}
.task-box {
  flex: 1;
  padding: 0 0 40px 9px;
  border: 2px solid #e2e2e2;
  border-width: 0 0 2px 2px;
  background: #fbfbfb;
}
.task-inner {
  width: 195px;
  height: 100%;
  border: 2px solid #dedede;
  border-radius: 3px;
  background: #fff;
}
.gravity-row {
  display: flex;
  align-items: flex-start;
  height: 60px;
  padding-top: 10px;
}
.gravity-row input {
  margin-top: 2px;
}
.gravity-row label {
  margin: 1px 0 0 7px;
}
.gravity-row .btn {
  width: 75px;
  margin: 0 167px 0 auto;
}
.task-body h3 {
  height: 27px;
}
.accel-box {
  width: 402px;
  height: 9px;
  border: 2px solid #dedede;
  border-bottom: 0;
}
.hscroll {
  display: flex;
  align-items: center;
  height: 18px;
  padding: 0 30px 0 11px;
}
.thumb {
  flex: 1;
  height: 18px;
  margin: 0 27px 0 11px;
  background: #b8b8b8;
}

/* Buttons and boxes */
.btn {
  height: 38px;
  padding: 0 8px;
  border: 2px solid #3a3a3a;
  background: #fff;
}
.btn:disabled {
  color: #9a9a9a;
  border-color: #a5a5a5;
}
.btn.primary {
  color: #fff;
  background: #2196f3;
}
input[type="checkbox"], input[type="radio"] {
  appearance: none;
  display: grid;
  place-items: center;
  flex: none;
  width: 21px;
  height: 21px;
  margin: 0;
  border: 2px solid #bcbcbc;
  background: #fff;
}
input[type="radio"] {
  border-radius: 50%;
}
input[type="radio"]:checked::after {
  content: "";
  width: 10px;
  height: 10px;
  border-radius: 50%;
  background: #444;
}
input[type="radio"]:disabled {
  background: #ececec;
}
input[type="checkbox"]:checked::after {
  content: "";
  width: 7px;
  height: 13px;
  margin-bottom: 3px;
  border: solid #333;
  border-width: 0 3px 3px 0;
  transform: rotate(35deg);
}
.combo {
  position: relative;
  display: block;
  width: 270px;
  height: 33px;
}
.combo select {
  appearance: none;
  width: 100%;
  height: 100%;
  padding: 0 4px;
  border: 2px solid #757575;
  border-right-width: 4px;
  border-radius: 0;
  background: linear-gradient(#6e6e6e, #6e6e6e) right bottom / 21px 2px no-repeat #fff;
}
.combo::after {
  content: "";
  position: absolute;
  right: 8px;
  top: 13px;
  border: 6px solid transparent;
  border-top: 7px solid #6e6e6e;
  border-bottom: 0;
}

/* Graphics view */
.view-panel {
  display: flex;
  flex-direction: column;
  min-width: 0;
  min-height: 0;
}
.view-head {
  display: flex;
  align-items: center;
  height: 48px;
  margin: 1px 20px 0 0;
  padding-left: 352px;
  border-top: 2px solid #222;
}
.view-close {
  display: grid;
  place-items: center;
  width: 30px;
  height: 30px;
  margin: 0 -1px 3px auto;
  border-radius: 6px;
  background: #ff8a8a;
}
.view-close svg {
  width: 16px;
  height: 16px;
}
.view-edge {
  width: 20px;
  height: 48px;
  margin: -3px -20px 0 0;
}
.view-body {
  flex: 1;
  min-height: 0;
  display: flex;
}
.view-tools {
  display: flex;
  flex-direction: column;
  align-items: center;
  justify-content: flex-end;
  width: 60px;
  padding-bottom: 22px;
}
.view-tools .on {
  display: grid;
  place-items: center;
  width: 48px;
  height: 46px;
  border: 2px solid #2f83c8;
  border-radius: 6px;
  background: #58a8e8;
}
.on svg {
  width: 18px;
  height: 20px;
}
.more {
  width: 12px;
  height: 16px;
  margin: 5px 0 12px;
}
.dots {
  width: 25px;
  height: 8px;
  margin-bottom: 16px;
  background: radial-gradient(#aaa 1px, transparent 1px) 0 0 / 5px 4px;
}
.view-tools button:last-child svg {
  width: 36px;
  height: 22px;
}
.canvas {
  position: relative;
  flex: 1;
  overflow: hidden;
  background: linear-gradient(#6b8ade, #95aae7 35%, #bccbf0 60%, #e0e7f8 80%, #fff 98%);
}
.model {
  width: 420px;
  height: 560px;
}
.watermark {
  position: absolute;
  top: 8px;
  right: 18px;
  display: flex;
  flex-direction: column;
  align-items: flex-end;
  color: #fff;
  font-family: "DejaVu Sans Mono", monospace;
  font-size: 13px;
  line-height: 16px;
}
.watermark b {
  font-size: 22px;
  line-height: 24px;
}
.watermark em {
  margin-top: 2px;
  padding: 0 4px;
  border: solid #dfe8ff;
  border-width: 1px 0;
  font-size: 12px;
  font-style: normal;
}
.triad {
  position: absolute;
  right: 12px;
  bottom: 2px;
  width: 128px;
  height: 140px;
  font: 22px "Liberation Sans", sans-serif;
}
.view-tabs {
  display: flex;
  height: 40px;
}
.view-tabs button {
  width: 104px;
  height: 36px;
  border: 2px solid #c3c3c3;
  border-right: 0;
  background: #ececec;
}
.view-tabs .current {
  width: 109px;
  height: 39px;
  border: 2px solid #c3c3c3;
  border-top: 0;
  border-radius: 0 0 5px 5px;
  background: #fff;
}
.view-tabs span {
  flex: 1;
  border-top: 2px solid #c3c3c3;
}

/* Wall dialog */
.dialog {
  position: absolute;
  top: 152px;
  left: 360px;
  right: 360px;
  padding: 0 6px 24px;
  border: 2px solid #3a93d8;
  background: #fff;
}
.dialog-title {
  display: flex;
  align-items: center;
  gap: 8px;
  height: 42px;
  padding: 0 8px 0 5px;
}
.dialog-title button {
  margin-left: auto;
}
.dialog-title button svg {
  width: 16px;
  height: 16px;
}
.zone {
  display: flex;
  flex-direction: column;
  width: 61%;
  padding-top: 8px;
}
.zone label {
  height: 28px;
}
.zone input {
  margin-bottom: 6px;
}
.zone input:read-only {
  background: #f1f1f1;
}
.dialog-tabs {
  display: flex;
  align-items: flex-end;
  height: 41px;
}
.dialog-tabs button {
  flex: 1;
  height: 38px;
  border: 2px solid #cfcfcf;
  border-right-width: 0;
  border-radius: 4px 4px 0 0;
  color: #a3a3a3;
  background: #ececec;
}
.dialog-tabs button:last-child {
  border-right-width: 2px;
}
.dialog-tabs .current {
  height: 41px;
  border-bottom: 0;
  color: #1c1c1c;
  background: #fff;
}
.dialog h3 {
  padding: 19px 8px 2px;
}
.thermal {
  display: flex;
  justify-content: space-between;
  margin: 0 6px 0 8px;
  padding: 8px 8px 9px 6px;
  border: 2px solid #e6e6e6;
  border-radius: 4px;
  background: #fbfbfb;
}
.radios {
  padding: 3px 0 4px 8px;
  background: #fff;
}
.radios label {
  display: flex;
  align-items: center;
  gap: 10px;
  height: 33px;
}
.off {
  color: #a3a3a3;
}
.thermal-left {
  width: 345px;
}
.material {
  display: flex;
  align-items: flex-end;
  justify-content: space-between;
  padding: 11px 2px 0 0;
}
.material label {
  display: block;
  height: 27px;
}
.material .btn {
  width: 64px;
  margin-bottom: 3px;
}
.line {
  display: flex;
  justify-content: flex-end;
  height: 36px;
}
.line label {
  margin: 6px 6px 0 0;
}
.line input[type="text"] {
  width: 270px;
}
.thickness {
  height: 42px;
  padding-right: 2px;
}
.param {
  width: 18px;
  height: 24px;
  margin: 6px 0 0 10px;
  border: 2px solid #333;
  background: #fff;
  font: bold 14px/18px "Liberation Mono", monospace;
}
.shell {
  height: 51px;
  padding: 9px 2px 0 0;
}
.line.shell label {
  margin: 2px 25px 0 8px;
}
.line.shell input[type="checkbox"] {
  margin-top: 3px;
}
.line.shell input[type="text"] {
  width: 216px;
  margin: 2px 9px 0 0;
  color: #777;
  background: #f1f1f1;
}
.shell .btn {
  width: 65px;
}
.thermal-right {
  align-self: flex-start;
  background: #fff;
}
.dialog-buttons {
  display: flex;
  justify-content: center;
  gap: 15px;
  margin-top: 11px;
  padding-top: 21px;
  border-top: 2px solid #b9b9b9;
}

/* Remote desktop bar */
.rdp {
  position: absolute;
  top: 0;
  left: 424px;
  right: 423px;
  height: 50px;
  background: #33415c;
  clip-path: polygon(0 0, 100% 0, calc(100% - 25px) 100%, 25px 100%);
}
.rdp-inner {
  display: flex;
  align-items: center;
  height: 48px;
  margin: 0 2px;
  padding: 0 78px 3px 70px;
  border-bottom: 1px solid #8db0dc;
  color: #e4edf8;
  background: linear-gradient(#82abdd, #6391c9 11px, #3a6dac 23px, #053b82 23px);
  clip-path: polygon(0 0, 100% 0, calc(100% - 24px) 100%, 24px 100%);
}
.rdp svg {
  width: 24px;
  height: 25px;
  margin-right: 18px;
}
.rdp .pin {
  align-self: flex-start;
  height: 41px;
  padding: 2px 8px 0;
  margin-right: 10px;
  background: rgba(20, 110, 200, 0.35);
}
.rdp .pin svg, .rdp button:last-child svg {
  margin: 0;
}
.rdp span {
  flex: 1;
  padding-right: 20px;
  text-align: center;
  font-family: "Open Sans", sans-serif;
  font-size: 21px;
}

/* Taskbar */
.taskbar {
  display: flex;
  height: 60px;
  color: #fff;
  background: #202226;
}
.start {
  display: grid;
  place-items: center;
  width: 73px;
}
.start svg {
  width: 24px;
  height: 24px;
}
.search {
  display: flex;
  align-items: center;
  gap: 16px;
  width: 515px;
  padding-left: 15px;
  border: 2px solid #bdbdbd;
  background: #f1f1f1;
}
.search svg {
  width: 24px;
  height: 25px;
}
.search input {
  flex: 1;
  border: 0;
  font-family: "Open Sans", sans-serif;
  font-size: 20px;
  background: none;
}
.search ::placeholder {
  color: #2b2b2b;
}
.task {
  position: relative;
  display: grid;
  place-items: center;
  width: 75px;
}
.task svg {
  width: 28px;
  height: 28px;
}
.open-app svg, .task[aria-label="Skype"] svg {
  width: 34px;
  height: 34px;
}
.open-app::after {
  content: "";
  position: absolute;
  left: 7px;
  right: 7px;
  bottom: 0;
  height: 3px;
  background: #76b9ed;
}
.multi::after {
  background: linear-gradient(90deg, #76b9ed 48px, #4c7593 48px);
}
.focused {
  background: #4b4d50;
}
.focused::after {
  left: 0;
  right: 0;
}
.app-letter {
  font: bold 25px "Liberation Sans", sans-serif;
  fill: #fff;
  text-anchor: middle;
}
.tray {
  display: flex;
  align-items: center;
  margin-left: auto;
  padding-right: 7px;
}
.tray button {
  padding: 0 12px;
}
.tray svg {
  width: 24px;
  height: 24px;
  fill: none;
  stroke: #fff;
  stroke-width: 1.5;
}
.tray .pen {
  padding-left: 16px;
}
.clock {
  display: flex;
  flex-direction: column;
  gap: 4px;
  width: 126px;
  text-align: center;
  font-family: "Open Sans", sans-serif;
  font-size: 17px;
}
.tray .notify {
  height: 60px;
  padding: 0 30px 0 12px;
  border-right: 1px solid #777;
}
.notify svg {
  stroke: none;
}
```
